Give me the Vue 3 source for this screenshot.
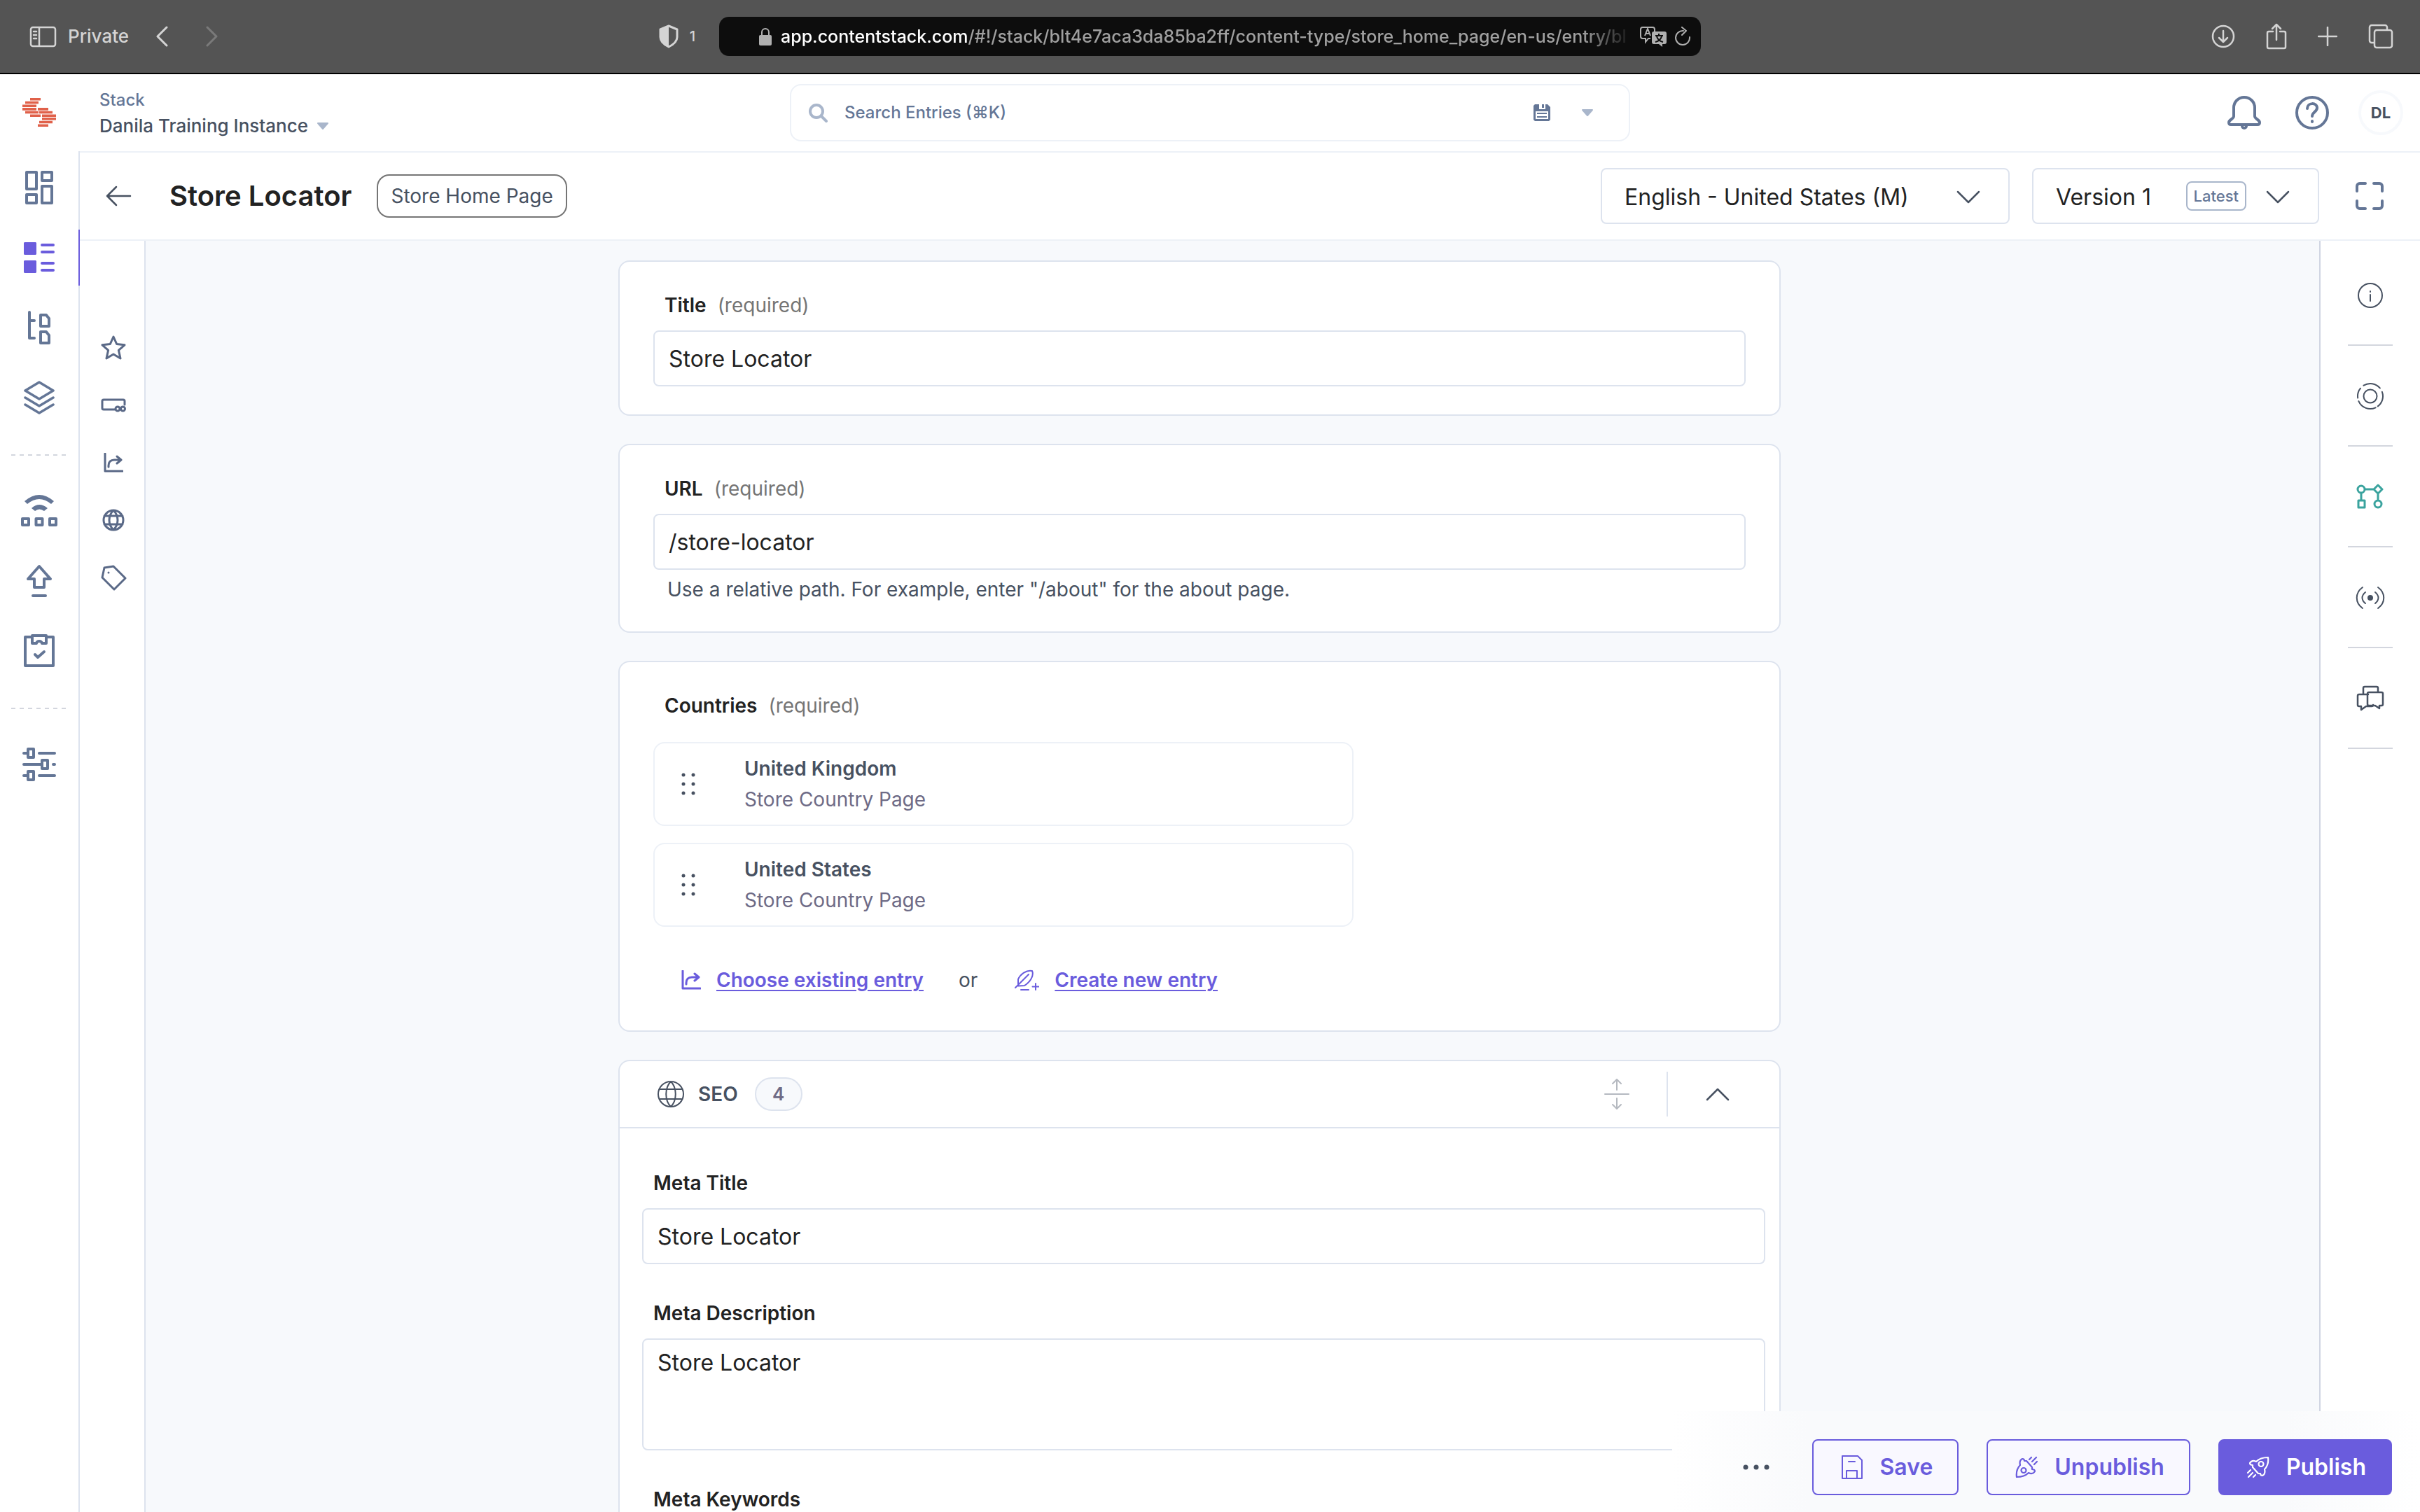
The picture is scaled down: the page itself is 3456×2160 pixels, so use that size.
<script setup>
import { h, ref } from 'vue'

const shapes = {
  sidebar: { box: '0 0 39 31', sw: 2.5, d: 'M5 2h29a3 3 0 0 1 3 3v21a3 3 0 0 1-3 3H5a3 3 0 0 1-3-3V5a3 3 0 0 1 3-3zM14 2v27M6 8h4M6 13h4M6 18h4' },
  back: { box: '0 0 18 30', sw: 3, d: 'M16 2L3 15l13 13' },
  forward: { box: '0 0 18 30', sw: 3, d: 'M2 2l13 13L2 28' },
  shield: { box: '0 0 28 34', sw: 3, d: 'M14 2l12 5v11c0 7-6 11-12 14C8 29 2 25 2 18V7z', f: 'M14 2v30C8 29 2 25 2 18V7z' },
  lock: { box: '0 0 20 28', sw: 2, d: 'M5 13V8a5 5 0 0 1 10 0v5', f: 'M3 12h14a2 2 0 0 1 2 2v11a2 2 0 0 1-2 2H3a2 2 0 0 1-2-2V14a2 2 0 0 1 2-2z' },
  reload: { box: '0 0 24 28', sw: 2, d: 'M13 6a10 10 0 1 0 9 9M11 1l6 5-6 6' },
  download: { box: '0 0 34 34', sw: 2.5, d: 'M17 2a15 15 0 1 1 0 30 15 15 0 1 1 0-30M17 9v16M11 19l6 6 6-6' },
  share: { box: '0 0 30 38', sw: 2.5, d: 'M10 12H4a2 2 0 0 0-2 2v20a2 2 0 0 0 2 2h22a2 2 0 0 0 2-2V14a2 2 0 0 0-2-2h-6M15 24V2M9 8l6-6 6 6' },
  plus: { box: '0 0 28 28', sw: 2.5, d: 'M14 1v26M1 14h26' },
  tabs: { box: '0 0 36 36', sw: 2.5, d: 'M12 9h19a3 3 0 0 1 3 3v19a3 3 0 0 1-3 3H12a3 3 0 0 1-3-3V12a3 3 0 0 1 3-3zM8 27H5a3 3 0 0 1-3-3V5a3 3 0 0 1 3-3h19a3 3 0 0 1 3 3v3' },
  caret: { box: '0 0 18 12', sw: 2, d: 'M2 2h14L9 10z', f: 'M2 2h14L9 10z' },
  search: { box: '0 0 28 28', sw: 4, d: 'M12 3a9 9 0 1 1 0 18 9 9 0 1 1 0-18M19 19l7 7' },
  bell: { box: '0 0 50 48', sw: 4, d: 'M25 2c-9 0-15 7-15 15v12c0 4-7 5-7 9 0 2 1 3 3 3h38c2 0 3-1 3-3 0-4-7-5-7-9V17C40 9 34 2 25 2zM22 42v1a3 3 0 0 0 6 0v-1' },
  help: { box: '0 0 48 48', sw: 4, d: 'M24 2a22 22 0 1 1 0 44 22 22 0 1 1 0-44M17 18c0-9 14-9 14-1 0 6-7 6-7 12M24 36v1' },
  arrow: { box: '0 0 38 30', sw: 2.5, d: 'M36 15H3M16 2L3 15l13 13' },
  down: { box: '0 0 34 20', sw: 2.5, d: 'M2 2l15 15L32 2' },
  up: { box: '0 0 34 20', sw: 2.5, d: 'M2 18L17 3l15 15' },
  expand: { box: '0 0 40 40', sw: 4, d: 'M2 13V6a4 4 0 0 1 4-4h8M26 2h8a4 4 0 0 1 4 4v7M38 27v7a4 4 0 0 1-4 4h-8M14 38H6a4 4 0 0 1-4-4v-7' },
  dashboard: { box: '0 0 40 48', sw: 4, d: 'M2 2h14v24H2zM24 2h14v12H24zM2 34h14v12H2zM24 22h14v24H24z' },
  entries: { box: '0 0 44 44', sw: 4, d: 'M26 4h16M26 14h16M26 30h16M26 40h16', f: 'M1 0h16l1 1v16l-1 1H1l-1-1V1zM1 26h16l1 1v16l-1 1H1l-1-1V27z' },
  tree: { box: '0 0 32 48', sw: 4, d: 'M2 2v37h7M2 14h7M18 6h8l4 5v11H18zM18 30h8l4 5v11H18z' },
  layers: { box: '0 0 44 48', sw: 3.5, d: 'M22 2l20 12-20 12L2 14zM2 24l20 12 20-12M2 34l20 12 20-12' },
  live: { box: '0 0 52 46', sw: 4, d: 'M2 34h9v9H2zM21.500 34h9v9h-9zM41 34h9v9h-9z', f: 'M5 9Q26-9 47 9l-4 4Q26-1 9 13zM15 19q11-10 23 0l-5 4q-7-5-13 0z' },
  publishQueue: { box: '0 0 42 48', sw: 4, d: 'M21 3L5 21h9v12h14V21h9zM12 45h18' },
  tasks: { box: '0 0 44 48', sw: 4, d: 'M12 4H2v41h40V4H32M12 2h20v11h-6c-1-4-7-4-8 0h-6zM16 29l4 4 9-8' },
  settings: { box: '0 0 48 48', sw: 4, d: 'M2 8h5M24 8h22M8 2h8v12H8zM2 24h25M28 18h8v12h-8zM44 24h2M2 40h5M24 40h22M8 34h8v12H8z' },
  star: { box: '0 0 36 36', sw: 3, d: 'M18 2l4.600 10.400 11.400 1.400-8.600 7.600L28 33l-10-6-10 6 2.600-11.600L2 13.800l11.400-1.400z' },
  component: { box: '0 0 36 20', sw: 3, d: 'M20 16H4a2 2 0 0 1-2-2V4a2 2 0 0 1 2-2h28a2 2 0 0 1 2 2v5M24 12a3 3 0 1 1 0 6 3 3 0 1 1 0-6M31.500 12a3 3 0 1 1 0 6 3 3 0 1 1 0-6' },
  reference: { box: '0 0 28 28', sw: 3, d: 'M2 1v25h25M7 20v-2c0-5 3-8 8-8h9M19 5l6 5-6 5' },
  globe: { box: '0 0 32 32', sw: 3, d: 'M16 2a14 14 0 1 1 0 28 14 14 0 1 1 0-28M16 2c-8 8-8 20 0 28M16 2c8 8 8 20 0 28M3 10h26M3 22h26' },
  globeThin: { box: '0 0 38 38', sw: 2, d: 'M19 1a18 18 0 1 1 0 36 18 18 0 1 1 0-36M19 1c-9 9-9 27 0 36M19 1c9 9 9 27 0 36M4 12h30M4 26h30' },
  tag: { box: '0 0 37 37', sw: 3, d: 'M5 4l13-2 17 17-16 16L2 18zM11 11v.1' },
  info: { box: '0 0 38 38', sw: 2, d: 'M19 2a17 17 0 1 1 0 34 17 17 0 1 1 0-34M19 18v9M19 13v1' },
  insight: { box: '-20 -20 40 40', sw: 2, d: 'M-9.500-15.300A18 18 0 0 1 13.800-11.600M16.900-6.200A18 18 0 0 1 10.800 14.400M7.600 16.300A18 18 0 0 1-16.600 7.100M-17.800 2.500A18 18 0 0 1-14-11.300M0-9.500a9.500 9.500 0 1 1 0 19 9.500 9.500 0 1 1 0-19' },
  workflow: { box: '0 0 40 38', sw: 3, d: 'M7 3a5 5 0 1 1 0 10A5 5 0 1 1 7 3M31 2l6 6-6 6-6-6zM12 8h13M7 13v11M31 14v10M3 24h9v10H3zM31 24a5 5 0 1 1 0 10 5 5 0 1 1 0-10' },
  broadcast: { box: '0 0 42 36', sw: 2, d: 'M10 3C-1 11-1 25 10 33M14 10c-6 5-6 11 0 16M32 3c11 8 11 22 0 30M28 10c6 5 6 11 0 16', f: 'M21 14a4 4 0 1 1 0 8 4 4 0 1 1 0-8' },
  comments: { box: '0 0 40 38', sw: 2.5, d: 'M10 13V4a2 2 0 0 1 2-2h17a2 2 0 0 1 2 2v5M17 13H4a2 2 0 0 0-2 2v13a2 2 0 0 0 2 2h3v5l7-5h8a2 2 0 0 0 2-2M18 10h18a2 2 0 0 1 2 2v15a2 2 0 0 1-2 2h-3v4l-6-4h-9a2 2 0 0 1-2-2V12a2 2 0 0 1 2-2z' },
  move: { box: '0 0 36 46', sw: 2, d: 'M1 23h34M18 17V2M12 8l6-6 6 6M18 29v15M12 38l6 6 6-6' },
  feather: { box: '0 0 36 32', sw: 2, d: 'M2 27L21 8M6 23V15C9 8 18 1 26 3c3 7-3 16-11 21l-9 .5M10 30h11M31 21v9M26.500 25.500h9' },
  save: { box: '0 0 32 36', sw: 2, d: 'M2 2h22l6 6v26H2zM11 10h9M8 34V23h15v11' },
  rocket: { box: '0 0 32 32', sw: 2.2, d: 'M30 2C22 2 17 4 13 8 9 6 6 7 4 10c0 2 2 3 4 3v3l8 9h3c0 2 1 3 3 3 4-2 4-5 3-9 4-4 6-9 5-17zM20 8a3.500 3.500 0 1 1 0 7 3.500 3.500 0 1 1 0-7M5 20l-4 4M8 24l-6 6M12 27l-3 3' },
  rocketDown: { box: '0 0 32 32', sw: 2.2, d: 'M2 30C10 30 15 28 19 24c4 2 7 1 9-2 0-2-2-3-4-3v-3l-8-9h-3c0-2-1-3-3-3-4 2-4 5-3 9-4 4-6 9-5 17zM12 17a3.500 3.500 0 1 1 0 7 3.500 3.500 0 1 1 0-7M27 12l4-4M24 8l6-6M20 5l3-3' }
}

const Icon = ({ name }) => {
  const s = shapes[name]
  const [, , width, height] = s.box.split(' ')
  return h('svg', { width, height, viewBox: s.box, fill: 'none', 'aria-hidden': 'true', style: 'display:block;flex:none' }, [
    s.f ? h('path', { d: s.f, fill: 'currentColor' }) : null,
    h('path', { d: s.d, stroke: 'currentColor', 'stroke-width': s.sw, 'stroke-linecap': 'round', 'stroke-linejoin': 'round' })
  ])
}
Icon.props = ['name']

const navGroups = [
  [['dashboard', 'Dashboard'], ['entries', 'Entries'], ['tree', 'Content Models'], ['layers', 'Assets']],
  [['live', 'Live Preview'], ['publishQueue', 'Publish Queue'], ['tasks', 'Tasks']],
  [['settings', 'Settings']]
]
const fieldNav = [['star', 'Title'], ['component', 'URL'], ['reference', 'Countries'], ['globe', 'SEO'], ['tag', 'Tags']]
const panels = [['info', 'Information'], ['insight', 'Insights'], ['workflow', 'Workflow'], ['broadcast', 'Publish status'], ['comments', 'Discussions']]
const countries = ['United Kingdom', 'United States']

const title = ref('Store Locator')
const url = ref('/store-locator')
const metaTitle = ref('Store Locator')
const metaDescription = ref('Store Locator')
const query = ref('')
</script>

<template>
  <div class="app">
    <div class="browser">
      <div class="browser-left">
        <Icon name="sidebar" />
        <span class="private">Private</span>
        <button class="plain" aria-label="Back"><Icon name="back" /></button>
        <button class="plain dim" aria-label="Forward"><Icon name="forward" /></button>
        <div class="shield"><Icon name="shield" /><span>1</span></div>
      </div>
      <div class="address">
        <Icon name="lock" />
        <div class="address-text"><b>app.contentstack.com</b>/#!/stack/blt4e7aca3da85ba2ff/content-type/store_home_page/en-us/entry/bl</div>
        <svg class="translate" width="40" height="30" viewBox="0 0 40 30" fill="none" aria-hidden="true">
          <path d="M16 18h-3l-4 5v-5H5a3 3 0 0 1-3-3V5a3 3 0 0 1 3-3h14a3 3 0 0 1 3 3v3M8 14l4-10 4 10M10 11h5" stroke="currentColor" stroke-width="2" />
          <path d="M21 8h15a3 3 0 0 1 3 3v12a3 3 0 0 1-3 3h-3v4l-5-4h-7a3 3 0 0 1-3-3V11a3 3 0 0 1 3-3z" fill="currentColor" />
          <path d="M23 14h11M28 11v3M32 15c-1 4-5 7-9 8M25 15c1 4 5 7 9 8" stroke="#0d0d0d" stroke-width="2" />
        </svg>
        <Icon name="reload" />
      </div>
      <div class="browser-right">
        <button class="plain" aria-label="Downloads"><Icon name="download" /></button>
        <button class="plain" aria-label="Share"><Icon name="share" /></button>
        <button class="plain" aria-label="New tab"><Icon name="plus" /></button>
        <button class="plain" aria-label="Tabs"><Icon name="tabs" /></button>
      </div>
    </div>

    <header class="top">
      <div class="top-left">
        <div class="logo">
          <svg width="48" height="42" viewBox="0 0 48 42" fill="#e0614a" aria-hidden="true">
            <path d="M11 0h15v3.600H11zM4 4.700h19v3.600H4zM0 9.400h20V13H0zM0 14.100h20v3.600H0zM22 14.100h15v3.600H22zM4 18.700h19v3.600H4zM24 18.700h19v3.600H24zM11 23.400h15V27H11zM28 23.400h20V27H28zM28 28h20v3.600H28zM24 32.700h19v3.600H24zM22 37.400h15V41H22z" />
          </svg>
        </div>
        <button class="plain stack">
          <span class="stack-label">Stack</span>
          <span class="stack-name">Danila Training Instance <Icon name="caret" /></span>
        </button>
      </div>
      <div class="search">
        <Icon name="search" />
        <input v-model="query" type="text" placeholder="Search Entries (⌘K)" aria-label="Search entries" />
        <button class="plain slate" aria-label="Saved searches">
          <svg width="24" height="24" viewBox="0 0 24 24" aria-hidden="true">
            <path d="M2 0h18l4 4v18l-2 2H2l-2-2V2z" fill="currentColor" />
            <path d="M8 0h9v7H8zM3 10h18v11H3z" fill="#fff" />
            <path d="M12 0h3v5h-3zM5 12h14v2H5zM5 17h14v2H5z" fill="currentColor" />
          </svg>
        </button>
        <button class="plain" aria-label="Search options"><Icon name="caret" /></button>
      </div>
      <div class="top-right">
        <button class="plain" aria-label="Notifications"><Icon name="bell" /></button>
        <button class="plain" aria-label="Help"><Icon name="help" /></button>
        <button class="plain avatar">DL</button>
      </div>
    </header>

    <div class="body">
      <nav class="rail">
        <div v-for="(group, g) in navGroups" :key="g" class="rail-group">
          <button v-for="[icon, label] in group" :key="icon" class="plain rail-item" :class="{ active: icon === 'entries' }" :aria-label="label">
            <Icon :name="icon" />
          </button>
        </div>
      </nav>

      <main class="main">
        <div class="entry-head">
          <button class="plain back" aria-label="Back to entries"><Icon name="arrow" /></button>
          <h1>Store Locator</h1>
          <span class="type-chip">Store Home Page</span>
          <div class="picker language">
            <select aria-label="Language"><option>English - United States (M)</option></select>
            <Icon name="down" />
          </div>
          <div class="picker version">
            <select aria-label="Version"><option>Version 1</option></select>
            <span class="latest">Latest</span>
            <Icon name="down" />
          </div>
          <button class="plain expand" aria-label="Full screen"><Icon name="expand" /></button>
        </div>

        <div class="entry-body">
          <nav class="field-nav">
            <button v-for="[icon, label] in fieldNav" :key="icon" class="plain" :aria-label="label"><Icon :name="icon" /></button>
          </nav>

          <form class="form" @submit.prevent>
            <section class="card">
              <label for="title">Title <span>(required)</span></label>
              <input id="title" v-model="title" class="field" type="text" />
            </section>

            <section class="card">
              <label for="url">URL <span>(required)</span></label>
              <input id="url" v-model="url" class="field" type="text" />
              <p class="hint">Use a relative path. For example, enter "/about" for the about page.</p>
            </section>

            <section class="card">
              <h2>Countries <span>(required)</span></h2>
              <ul class="references">
                <li v-for="country in countries" :key="country">
                  <svg width="20" height="32" viewBox="0 0 20 32" fill="currentColor" aria-hidden="true">
                    <circle v-for="n in 6" :key="n" :cx="n % 2 ? 3 : 17" :cy="3 + 13 * Math.floor((n - 1) / 2)" r="2.500" />
                  </svg>
                  <div>
                    <strong>{{ country }}</strong>
                    <small>Store Country Page</small>
                  </div>
                </li>
              </ul>
              <div class="links">
                <Icon name="reference" /><a href="#choose">Choose existing entry</a>
                <span>or</span>
                <Icon name="feather" /><a href="#create">Create new entry</a>
              </div>
            </section>

            <section class="card group">
              <div class="group-head">
                <Icon name="globeThin" />
                <h2>SEO</h2>
                <span class="count">4</span>
                <button class="plain move" type="button" aria-label="Expand all"><Icon name="move" /></button>
                <button class="plain collapse" type="button" aria-label="Collapse"><Icon name="up" /></button>
              </div>
              <div class="group-body">
                <label for="meta-title">Meta Title</label>
                <input id="meta-title" v-model="metaTitle" class="field" type="text" />
                <label for="meta-description">Meta Description</label>
                <textarea id="meta-description" v-model="metaDescription" class="field"></textarea>
                <label for="meta-keywords">Meta Keywords</label>
                <input id="meta-keywords" class="field" type="text" />
              </div>
            </section>
          </form>

          <aside class="panels">
            <button v-for="[icon, label] in panels" :key="icon" class="plain" :class="icon" :aria-label="label"><Icon :name="icon" /></button>
          </aside>
        </div>
      </main>
    </div>

    <div class="actions">
      <button class="plain more" aria-label="More actions">
        <svg width="40" height="10" viewBox="0 0 40 10" fill="currentColor" aria-hidden="true"><circle cx="5" cy="5" r="3.500" /><circle cx="20" cy="5" r="3.500" /><circle cx="35" cy="5" r="3.500" /></svg>
      </button>
      <button class="action"><Icon name="save" />Save</button>
      <button class="action"><Icon name="rocketDown" />Unpublish</button>
      <button class="action primary"><Icon name="rocket" />Publish</button>
    </div>
  </div>
</template>

<style>
body {
  margin: 0;
}
</style>

<style scoped>
.app {
  position: relative;
  display: flex;
  flex-direction: column;
  height: 100vh;
  overflow: hidden;
  background: #fff;
  color: #475161;
  font-family: Inter, "Liberation Sans", sans-serif;
  font-size: 28px;
  line-height: 40px;
}
.app * {
  box-sizing: border-box;
}
.plain {
  display: flex;
  align-items: center;
  justify-content: center;
  flex: none;
  padding: 0;
  border: 0;
  background: none;
  color: inherit;
  font: inherit;
  text-align: left;
}
h1,
h2,
p,
ul {
  margin: 0;
  padding: 0;
}

/* Browser bar */
.browser {
  display: grid;
  grid-template-columns: 1fr 1402px 1fr;
  align-items: center;
  flex: none;
  height: 106px;
  border-bottom: 2px solid #000;
  background: #545454;
  color: #d4d4d4;
  font-size: 26px;
  font-weight: 500;
}
.browser-left {
  display: flex;
  align-items: center;
  padding-left: 42px;
}
.private {
  margin: 0 38px 0 16px;
}
.dim {
  margin-left: 54px;
  color: #7a7a7a;
}
.shield {
  display: flex;
  align-items: center;
  gap: 16px;
  margin: 0 34px 0 auto;
  font-size: 20px;
}
.address {
  display: flex;
  align-items: center;
  height: 56px;
  padding: 0 14px 0 56px;
  border-radius: 14px;
  background: #0d0d0d;
  color: #b0b0b0;
}
.address-text {
  flex: 1;
  min-width: 0;
  margin: 0 10px 0 12px;
  white-space: nowrap;
  color: #a0a0a0;
  font-size: 25px;
  -webkit-mask-image: linear-gradient(90deg, #000 calc(100% - 70px), transparent);
  mask-image: linear-gradient(90deg, #000 calc(100% - 70px), transparent);
}
.address-text b {
  color: #fff;
  font-weight: 500;
}
.translate {
  flex: none;
  margin-right: 10px;
}
.browser-right {
  display: flex;
  align-items: center;
  justify-content: flex-end;
  gap: 44px;
  padding-right: 38px;
}

/* Product header */
.top {
  display: grid;
  grid-template-columns: 1fr 1200px 1fr;
  align-items: center;
  flex: none;
  height: 110px;
  font-size: 24px;
  font-weight: 500;
}
.top-left {
  display: flex;
  align-items: center;
}
.logo {
  display: flex;
  justify-content: center;
  width: 112px;
  margin-right: 30px;
}
.stack {
  flex-direction: column;
  align-items: flex-start;
  line-height: 37px;
}
.stack-label,
.slate,
.top-right {
  color: #647696;
}
.stack-name {
  display: flex;
  align-items: center;
  gap: 12px;
  font-size: 26px;
}
.stack-name svg,
.search {
  color: #a9b6cb;
}
.search {
  display: flex;
  align-items: center;
  height: 82px;
  padding: 0 50px 0 24px;
  border: 2px solid #edf1f7;
  border-radius: 16px;
}
.search input {
  flex: 1;
  min-width: 0;
  padding: 0 24px;
  border: 0;
  outline: 0;
  background: none;
  font: inherit;
}
.search input::placeholder {
  color: #647696;
  opacity: 1;
}
.slate {
  margin-right: 44px;
}
.top-right {
  display: flex;
  align-items: center;
  justify-content: flex-end;
  gap: 48px;
  padding-right: 24px;
}
.avatar {
  width: 64px;
  height: 64px;
  margin-left: -6px;
  border: 4px solid #f7f9fc;
  border-radius: 50%;
  color: #475161;
  font-size: 22px;
  font-weight: 700;
}

/* Main navigation */
.body {
  display: flex;
  flex: 1;
  min-height: 0;
}
.rail {
  flex: none;
  width: 114px;
  padding-top: 2px;
  border-right: 2px solid #dde3ee;
  color: #647696;
}
.rail-group + .rail-group::before {
  content: "";
  display: block;
  width: 80px;
  height: 2px;
  margin: 31px auto 29px;
  background: repeating-linear-gradient(90deg, #d3d6de 0 6px, transparent 6px 12px);
}
.rail-item {
  position: relative;
  width: 112px;
  height: 100px;
}
.active {
  color: #6a5cdd;
}
.active::after {
  content: "";
  position: absolute;
  top: 10px;
  right: -2px;
  width: 2px;
  height: 80px;
  background: #6a5cdd;
}

/* Entry header */
.main {
  display: flex;
  flex-direction: column;
  flex: 1;
  min-width: 0;
  border-top: 2px solid #edf1f7;
}
.entry-head {
  display: flex;
  align-items: center;
  flex: none;
  height: 126px;
  padding: 0 52px 0 36px;
  border-bottom: 2px solid #edf1f7;
}
h1 {
  margin: 0 36px 0 54px;
  color: #222;
  font-size: 40px;
  font-weight: 600;
}
.type-chip {
  padding: 9px 18px;
  border: 2px solid #757575;
  border-radius: 18px;
}
.picker {
  display: flex;
  align-items: center;
  height: 80px;
  padding-right: 40px;
  border: 2px solid #dde3ee;
  border-radius: 8px;
}
.picker select {
  flex: 1;
  min-width: 0;
  height: 76px;
  padding: 4px 0 0 32px;
  border: 0;
  outline: 0;
  appearance: none;
  background: none;
  color: #222;
  font: 400 32px/40px Inter, "Liberation Sans", sans-serif;
}
.picker svg {
  margin-top: 4px;
}
.language {
  width: 584px;
  margin: 0 32px 0 auto;
}
.version {
  width: 410px;
}
.latest {
  margin-right: 28px;
  padding: 0 9px;
  border: 2px solid #a9b6cb;
  border-radius: 8px;
  color: #647696;
  font-size: 22px;
  font-weight: 500;
  line-height: 38px;
}
.expand {
  margin-left: 52px;
  color: #647696;
}

/* Entry body */
.entry-body {
  display: flex;
  flex: 1;
  min-height: 0;
}
.field-nav {
  flex: none;
  width: 94px;
  padding-top: 112px;
  border-right: 2px solid #dde3ee;
  color: #5a6987;
}
.field-nav button {
  width: 96px;
  height: 82px;
}
.form {
  display: flex;
  flex-direction: column;
  align-items: center;
  flex: 1;
  gap: 40px;
  min-width: 0;
  padding: 28px 94px 28px 0;
  overflow-y: auto;
  scrollbar-width: none;
  background: #f7f9fc;
}
.card {
  flex: none;
  width: 100%;
  max-width: 1660px;
  padding: 42px 48px 40px;
  border: 2px solid #dde3ee;
  border-radius: 16px;
  background: #fff;
}
.card label,
.card > h2 {
  display: flex;
  gap: 16px;
  margin-bottom: 16px;
  padding-left: 16px;
  color: #222;
  font-size: 28px;
  font-weight: 600;
}
.card label span,
.card > h2 span {
  color: #757575;
  font-weight: 400;
}
.field {
  display: block;
  width: 100%;
  height: 80px;
  padding: 0 20px;
  border: 2px solid #dde3ee;
  border-radius: 8px;
  outline: 0;
  background: #fff;
  color: #222;
  font: 400 32px/40px Inter, "Liberation Sans", sans-serif;
}
textarea.field {
  height: 160px;
  padding: 13px 20px;
  resize: none;
}
.hint {
  margin-top: 8px;
  padding-left: 20px;
}
.references {
  display: flex;
  flex-direction: column;
  gap: 24px;
  margin-top: 32px;
  list-style: none;
}
.references li {
  display: flex;
  align-items: center;
  gap: 70px;
  width: 100%;
  max-width: 1000px;
  height: 120px;
  padding-left: 38px;
  border: 2px solid #edf1f7;
  border-radius: 16px;
}
.references strong,
.references small {
  display: block;
  font-size: 28px;
  line-height: 44px;
}
.references strong {
  font-weight: 600;
}
.references small {
  color: #6e6b86;
}
.links {
  display: flex;
  align-items: center;
  padding: 56px 0 12px 40px;
  color: #6a5cdd;
}
.links a {
  margin-left: 22px;
  color: inherit;
  font-weight: 600;
  text-decoration-thickness: 2px;
  text-underline-offset: 4px;
}
.links span {
  margin: 0 52px 0 50px;
  color: #475161;
}
.group {
  padding: 0;
}
.group-head {
  display: flex;
  align-items: center;
  height: 96px;
  padding: 0 71px 0 54px;
  border-bottom: 2px solid #dde3ee;
}
.group-head h2 {
  margin: 0 24px 0 20px;
  font-size: 28px;
  font-weight: 600;
}
.count {
  width: 68px;
  height: 48px;
  border: 2px solid #dde3ee;
  border-radius: 24px;
  background: #f7f9fc;
  color: #6e6b86;
  font-size: 26px;
  font-weight: 600;
  line-height: 44px;
  text-align: center;
}
.move {
  margin-left: auto;
  margin-right: 53px;
  color: #b5b9c0;
}
.collapse {
  height: 64px;
  padding-left: 54px;
  border-left: 2px solid #dde3ee;
}
.group-body {
  padding: 58px 20px 50px 32px;
}
.group-body .field + label {
  margin-top: 50px;
}

/* Side panels */
.panels {
  flex: none;
  width: 144px;
  padding-top: 6px;
  border-left: 2px solid #d0d5e2;
}
.panels button {
  width: 64px;
  height: 144px;
  margin: 0 auto;
  padding-top: 2px;
  border-bottom: 2px solid #d3d6de;
}
.panels .workflow {
  color: #3aa39e;
}

/* Entry actions */
.actions {
  position: absolute;
  right: 0;
  bottom: 0;
  display: flex;
  gap: 40px;
  padding: 40px 40px 24px 100px;
  background: linear-gradient(90deg, #fff, #f9fafc 18%, #f9fafc 82%, #fff);
}
.more {
  margin-right: 20px;
}
.action {
  display: flex;
  align-items: center;
  gap: 24px;
  height: 80px;
  padding: 0 35px 0 39px;
  border: 2px solid #6a5cdd;
  border-radius: 8px;
  background: #f9f8ff;
  color: #6a5cdd;
  font: 600 32px/40px Inter, "Liberation Sans", sans-serif;
}
.primary {
  background: #6a5cdd;
  color: #fff;
}
</style>
